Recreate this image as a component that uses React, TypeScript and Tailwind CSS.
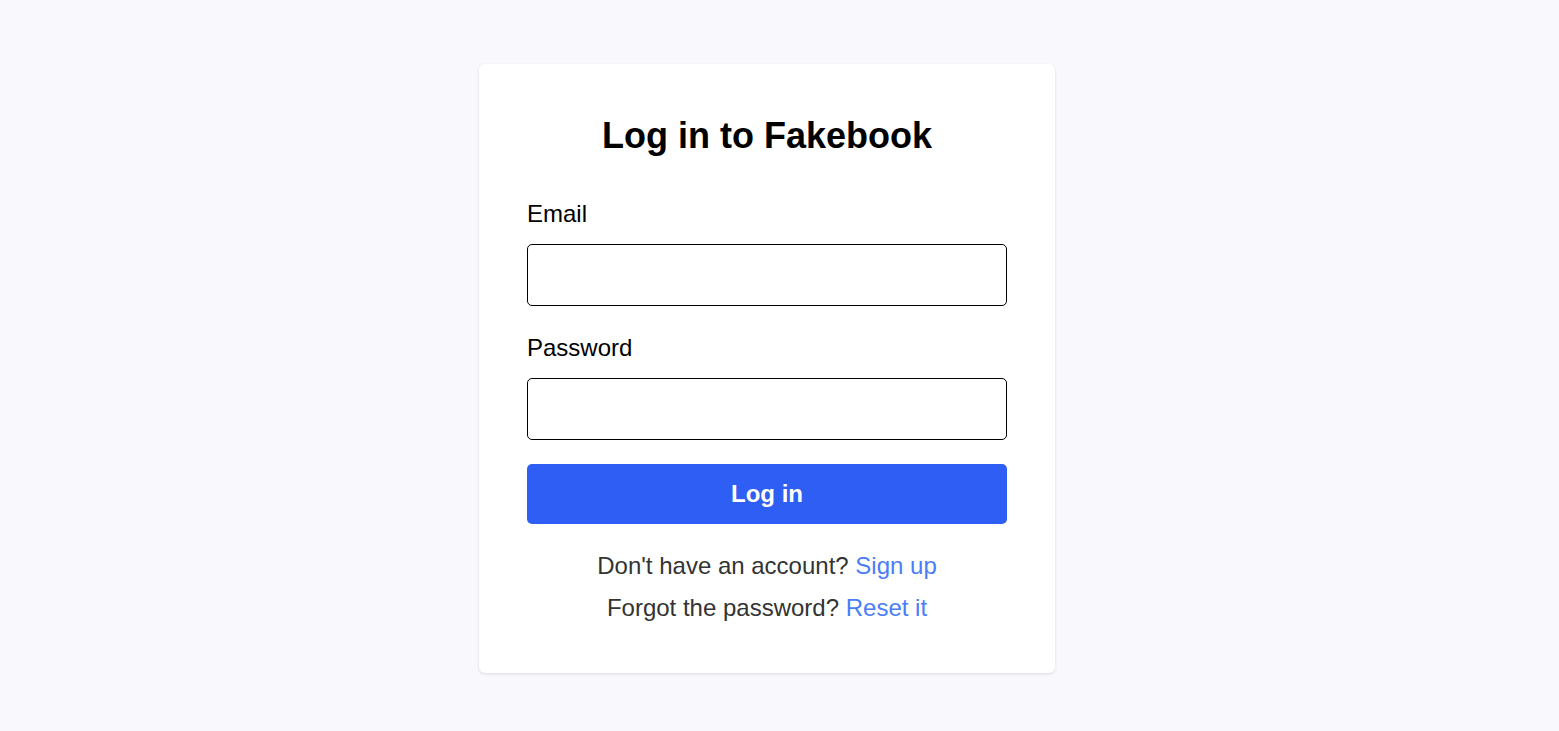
export default function App() {
  return (
    <div
      className="flex min-h-screen justify-center bg-[#f8f8fd] pr-[25px] pt-16"
      style={{ fontFamily: '"Liberation Sans", Arial, sans-serif' }}
    >
      <div className="h-[609px] w-[576px] rounded-md bg-white px-12 pt-[52px] shadow-[0_1px_3px_rgba(0,0,0,0.12)]">
        <h1 className="text-center text-[36px] font-bold leading-[40px] text-black">
          Log in to Fakebook
        </h1>
        <form className="mt-[42px] flex flex-col">
          <label className="text-[24px] leading-[32px] text-black">Email</label>
          <input
            type="email"
            className="mt-[14px] h-[62px] rounded-[5px] border border-black px-3 text-[20px] outline-none"
          />
          <label className="mt-[26px] text-[24px] leading-[32px] text-black">
            Password
          </label>
          <input
            type="password"
            className="mt-[14px] h-[62px] rounded-[5px] border border-black px-3 text-[20px] outline-none"
          />
          <button
            type="button"
            className="mt-[24px] h-[60px] rounded-[5px] bg-[#2e5ef3] text-[24px] font-bold text-white"
          >
            Log in
          </button>
        </form>
        <div className="mt-6 flex flex-col gap-[6px] text-center text-[24px] leading-[36px] text-[#333333]">
          <p>
            Don't have an account?{" "}
            <a href="#" className="text-[#4b7df6]">
              Sign up
            </a>
          </p>
          <p>
            Forgot the password?{" "}
            <a href="#" className="text-[#4b7df6]">
              Reset it
            </a>
          </p>
        </div>
      </div>
    </div>
  );
}
